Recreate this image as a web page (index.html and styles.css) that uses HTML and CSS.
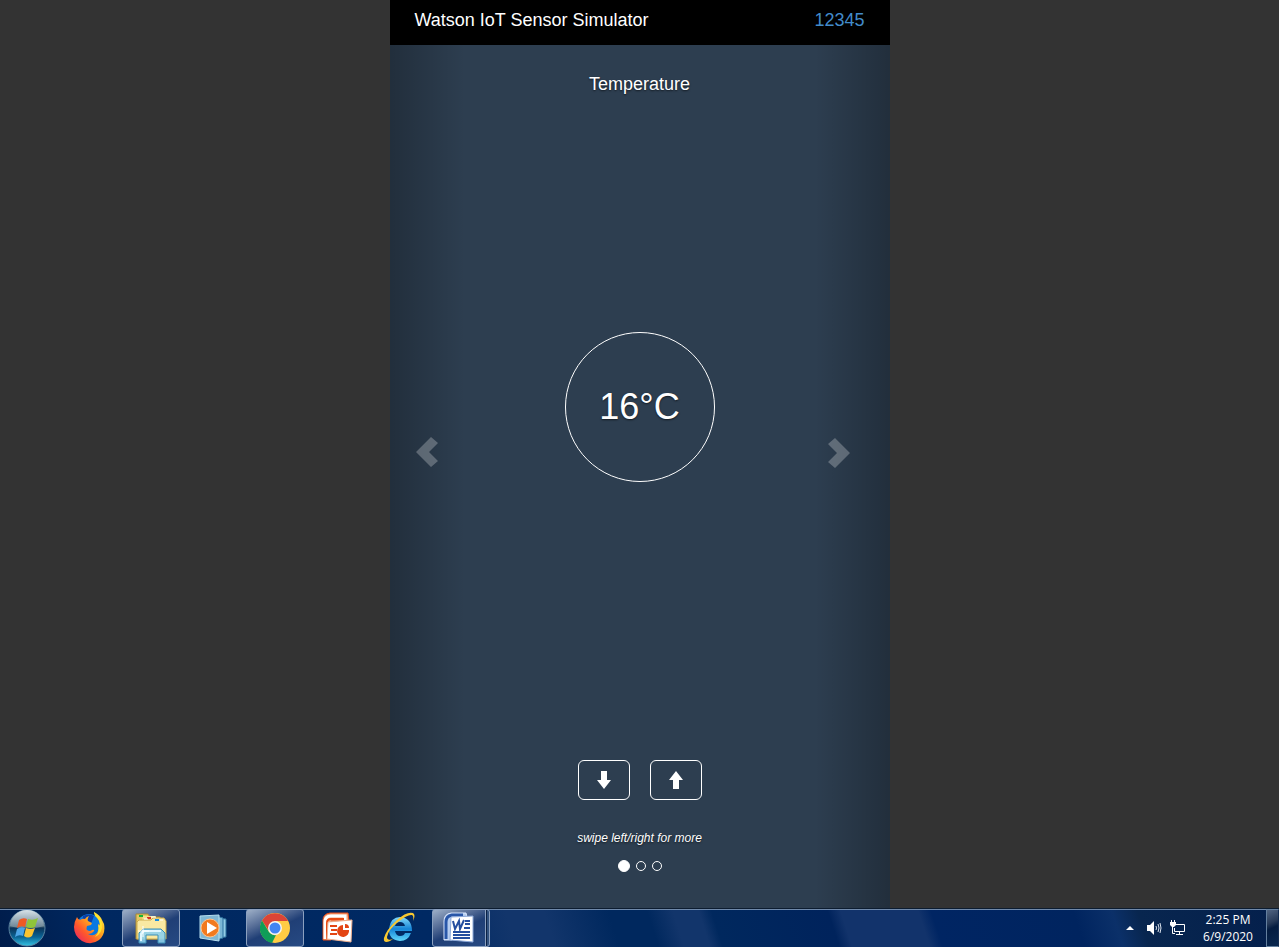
FILE: index.html
```html
<!DOCTYPE html>
<html lang="en">
<head>
<meta charset="utf-8">
<title>Watson IoT Sensor Simulator</title>
<link rel="stylesheet" href="styles.css">
</head>
<body>
<main class="app">
  <header class="app-header">
    <h1 class="app-title">Watson IoT Sensor Simulator</h1>
    <a class="device-link" href="#">12345</a>
  </header>
  <section class="carousel">
    <button class="control control-prev" aria-label="Previous sensor">
      <svg width="22" height="30" viewBox="0 0 22 30"><path d="M15 0 22 6 13 15 22 24 15 30 0 15Z" fill="#fff"/></svg>
    </button>
    <div class="slide">
      <h2 class="sensor-name">Temperature</h2>
      <div class="reading-area"><output class="reading">16°C</output></div>
      <div class="actions">
        <button class="step" aria-label="Decrease"><svg width="14" height="18" viewBox="0 0 14 18"><path d="M4 0H10V9H14L7 18 0 9H4Z" fill="#fff"/></svg></button>
        <button class="step" aria-label="Increase"><svg width="14" height="18" viewBox="0 0 14 18"><path d="M4 18H10V9H14L7 0 0 9H4Z" fill="#fff"/></svg></button>
      </div>
      <p class="hint">swipe left/right for more</p>
      <div class="dots">
        <button class="dot dot-active" aria-label="Slide 1"></button>
        <button class="dot" aria-label="Slide 2"></button>
        <button class="dot" aria-label="Slide 3"></button>
      </div>
    </div>
    <button class="control control-next" aria-label="Next sensor">
      <svg width="22" height="30" viewBox="0 0 22 30"><path d="M7 0 0 6 9 15 0 24 7 30 22 15Z" fill="#fff"/></svg>
    </button>
  </section>
</main>
<footer class="taskbar">
  <nav class="tasks">
    <button class="start" aria-label="Start">
      <svg width="38" height="38" viewBox="0 0 38 38">
        <defs>
          <linearGradient id="orb" x2="0" y2="1"><stop offset="0" stop-color="#6f8290"/><stop offset=".46" stop-color="#4b6677"/><stop offset=".5" stop-color="#0b3358"/><stop offset=".75" stop-color="#0a6496"/><stop offset="1" stop-color="#35c4e4"/></linearGradient>
          <linearGradient id="shine" x2="0" y2="1"><stop offset="0" stop-color="#e4edf2" stop-opacity=".9"/><stop offset="1" stop-color="#a8bfcd" stop-opacity=".3"/></linearGradient>
        </defs>
        <circle cx="19" cy="19" r="18" fill="url(#orb)" stroke="#5b83a0"/>
        <path d="M2 17a17 16 0 0 1 34 0Q19 23 2 17Z" fill="url(#shine)"/>
        <path d="M11 11q4-3 8-1l-2 8q-4-2-8 1Z" fill="#ee5a24"/>
        <path d="M20 10q5 2 10-1l-3 9q-4 2-9 0Z" fill="#8fc43a"/>
        <path d="M9 20q4-3 8-1l-2 8q-4-2-8 1Z" fill="#4ba4e6"/>
        <path d="M18 19q4 2 9 0l-3 8q-4 3-8 0Z" fill="#fcc430"/>
      </svg>
    </button>
    <button class="task" aria-label="Firefox">
      <svg width="32" height="32" viewBox="0 0 32 32">
        <defs>
          <linearGradient id="fox" x1="1" y1="0" x2="0" y2="1"><stop offset="0" stop-color="#fff24a"/><stop offset=".35" stop-color="#ffb21e"/><stop offset=".65" stop-color="#ff5a2b"/><stop offset="1" stop-color="#e41571"/></linearGradient>
        </defs>
        <circle cx="16" cy="14" r="12" fill="#0878e0"/>
        <path d="M10 4a12 12 0 0 1 11 0l-3 8h-9Z" fill="#0a3fa8"/>
        <path d="M4 5Q5 8 7 8q3-2 5-1 1-2 4-3-2 3-1 5l4 2-1 2-4 1q-1 3 0 4 3 2 5 0 3-1 2 1-2 3-6 3 5 3 9-1 3-4 1-9l2 1q0-6-5-10-1-2-1-3 6 3 8 8l2 4q2 10-5 16-8 6-17 1-8-5-8-14 0-5 3-10Z" fill="url(#fox)"/>
        <path d="M21 0q7 4 8 12 1 9-7 13 5-5 3-12l2 1q0-6-5-10Z" fill="#ffe22e"/>
      </svg>
    </button>
    <button class="task task-open" aria-label="Windows Explorer">
      <svg width="34" height="32" viewBox="0 0 34 32">
        <path d="M2 6V2h12l2 3h10l1 4v18H2Z" fill="#e5c762" stroke="#a88932"/>
        <path d="M8 8 9 4h12l2 3h8v20H5Z" fill="#f4e08d"/>
        <path d="M3 10 5 8h12l2-2h11l2 3v18H3Z" fill="#f9e9a2" stroke="#cdac4c"/>
        <path d="M5 3h4v2H5Z" fill="#15b635"/><path d="M13 5h4v2h-4Z" fill="#d63222"/><path d="M21 7h4v2h-4Z" fill="#158be0"/>
        <path d="M10 7h4M17 5h5M26 8h3" stroke="#fff"/>
        <path d="M5 31V21l4-4h18l4 4v10h-7v-8H12v8Z" fill="#8ed0eb" fill-opacity=".9" stroke="#3b8fb9"/>
        <path d="M7 29V22l3-3h17" fill="none" stroke="#e1f7ff" stroke-width="2"/>
        <path d="M9 14v11M4 19h11" stroke="#fff"/>
      </svg>
    </button>
    <button class="task" aria-label="Media Player">
      <svg width="28" height="28" viewBox="0 0 28 28">
        <path d="M17 4 27 5v18l-10 1Z" fill="#91cce6" stroke="#2d719e"/>
        <path d="M17 2 24 4v20l-7 2Z" fill="#79b6d5" stroke="#2d719e"/>
        <path d="M1 2 20 1v26L1 24Z" fill="#7fb7d4" stroke="#b6def0"/>
        <circle cx="11" cy="14" r="9" fill="#f27a1f" stroke="#ffc38c"/>
        <path d="M8 8 18 14 8 20Z" fill="#fff"/>
      </svg>
    </button>
    <button class="task task-open" aria-label="Chrome">
      <svg width="30" height="30" viewBox="0 0 30 30">
        <circle cx="15" cy="15" r="15" fill="#fc4"/>
        <path d="M2 7.500A15 15 0 0 1 28 8H15L9 18Z" fill="#db4437"/>
        <path d="M2 7.500 9 19q3 4 7 3l-4 8A15 15 0 0 1 2 7.500Z" fill="#109d58"/>
        <circle cx="15" cy="15" r="7" fill="#f5f5f5"/><circle cx="15" cy="15" r="5.500" fill="#4285f4"/>
      </svg>
    </button>
    <button class="task" aria-label="PowerPoint">
      <svg width="32" height="32" viewBox="0 0 32 32">
        <path d="M2 28V8q0-6 7-7h18l1 8H10v19Z" fill="#f4a77e" stroke="#e94a16"/>
        <path d="M4 27V10q0-6 6-6h14v4" fill="none" stroke="#fff" stroke-width="3"/>
        <path d="M6 27V11q0-4 4-4h13" fill="none" stroke="#e84812" stroke-width="2"/>
        <path d="M7 10 31 8 30 30 6 27Z" fill="#fff" stroke="#efb08f"/>
        <path d="M9 13h7v2H9Zm1 4h6v2h-6Zm-1 4h7v2H9Z" fill="#e34514"/>
        <path d="M22 13v5h6a6 6 0 1 1-6-5Z" fill="#e34514"/><path d="M24 12q4 0 4 4h-4Z" fill="#e34514"/>
      </svg>
    </button>
    <button class="task" aria-label="Internet Explorer">
      <svg width="34" height="32" viewBox="0 0 34 32">
        <defs><linearGradient id="ie" x2="0" y2="1"><stop offset="0" stop-color="#83dafb"/><stop offset=".5" stop-color="#1584d7"/><stop offset="1" stop-color="#60d6fa"/></linearGradient></defs>
        <path d="M30 19H13q1 5 5 5 4 0 5-3h6q-3 8-11 8-12-1-11-13Q9 5 18 5q12 1 12 14ZM13 14h10q-1-4-5-4t-5 4Z" fill="url(#ie)" fill-rule="evenodd"/>
        <path d="M31 9Q34 3 31 1 25-1 15 8 4 18 2 26q-1 6 6 3l3-2Q5 29 5 25q1-7 11-15Q26 2 30 3q2 1 1 6Z" fill="#f8c830"/>
      </svg>
    </button>
    <button class="task task-open task-stack" aria-label="Word">
      <svg width="32" height="32" viewBox="0 0 32 32">
        <path d="M2 28V9q0-7 7-8h15l1 4H10v23Z" fill="#b7cef0" stroke="#dce9ff"/>
        <path d="M4 27V10q0-6 6-7h11" fill="none" stroke="#2856a8" stroke-width="3"/>
        <path d="M9 5 31 4V30L8 28Z" fill="#fff" stroke="#8aa7d8"/>
        <path d="m11 9 2 8 4-8 1 8 4-9" fill="none" stroke="#244e9f" stroke-width="2"/>
        <path d="M23 9h5M23 12h5M22 16h6M11 20h17M11 23h17M11 26h17" stroke="#244e9f" stroke-width="2"/>
      </svg>
    </button>
  </nav>
  <div class="tray">
    <button class="tray-icon" aria-label="Show hidden icons"><svg width="8" height="4" viewBox="0 0 8 4"><path d="M0 4 4 0 8 4Z" fill="#fff"/></svg></button>
    <button class="tray-icon" aria-label="Volume"><svg width="16" height="14" viewBox="0 0 16 14"><path d="M1 4h3l4-4v14l-4-4H1Z" fill="#fff"/><path d="M10 5q1 2 0 4M12 3q2 4 0 8M14 2q2 5 0 10" fill="none" stroke="#dce4ee"/></svg></button>
    <button class="tray-icon" aria-label="Network"><svg width="16" height="16" viewBox="0 0 16 16"><path d="M5 4.500h9.500v7H4.500V8M6 14.500h7M9.500 12v2M2.500 7v6.500H5M1.500 0v3M4.500 0v3" fill="none" stroke="#fff"/><path d="M0 2h6v3L4 7H2L0 5Z" fill="#fff"/></svg></button>
    <time class="clock" datetime="2020-06-09T14:25"><span>2:25 PM</span><span>6/9/2020</span></time>
    <button class="show-desktop" aria-label="Show desktop"></button>
  </div>
</footer>
</body>
</html>
```
FILE: styles.css
```css
* { box-sizing: border-box; }
html { height: 100%; }
body {
  display: flex;
  flex-direction: column;
  min-height: 100%;
  margin: 0;
  background: #333;
  color: #fff;
  font-family: "Liberation Sans", Arial, sans-serif;
}
button {
  padding: 0;
  border: 0;
  background: none;
  color: inherit;
  font: inherit;
  cursor: pointer;
}
svg { display: block; }

.app {
  display: flex;
  flex: 1;
  flex-direction: column;
  width: 100%;
  max-width: 500px;
  margin: 0 auto;
  background: #2d3e50;
}
.app-header {
  display: flex;
  justify-content: space-between;
  padding: 10px 25px 15px;
  background: #000;
  font-size: 18px;
  line-height: 20px;
}
.app-title, .sensor-name {
  margin: 0;
  font-size: 18px;
  font-weight: 400;
  line-height: 20px;
}
.device-link { color: #428bca; text-decoration: none; }

.carousel {
  display: grid;
  flex: 1;
  grid-template-columns: 15% 1fr 15%;
  text-shadow: 0 1px 2px rgba(0, 0, 0, .6);
}
.control {
  display: flex;
  align-items: center;
  justify-content: center;
}
.control svg { opacity: .25; }
.control-prev {
  padding-bottom: 49px;
  background: linear-gradient(to right, rgba(0, 0, 0, .25), transparent);
}
.control-next {
  padding: 0 26px 47px 0;
  background: linear-gradient(to left, rgba(0, 0, 0, .25), transparent);
}
.slide {
  display: flex;
  flex-direction: column;
  align-items: center;
  padding: 29px 0 35px;
}
.reading-area {
  display: flex;
  flex: 1;
  align-items: center;
  padding-bottom: 41px;
}
.reading {
  display: grid;
  place-items: center;
  width: 150px;
  height: 150px;
  border: 1px solid #fff;
  border-radius: 50%;
  font-size: 36px;
  line-height: 40px;
}
.actions { display: flex; gap: 20px; }
.step {
  display: grid;
  place-items: center;
  width: 52px;
  height: 40px;
  border: 1px solid #fff;
  border-radius: 6px;
}
.hint {
  margin: 30px 0 12px;
  font-size: 12px;
  font-style: italic;
  line-height: 17px;
}
.dots {
  display: flex;
  align-items: center;
  gap: 6px;
  height: 14px;
}
.dot {
  width: 10px;
  height: 10px;
  border: 1px solid #fff;
  border-radius: 50%;
}
.dot-active {
  width: 12px;
  height: 12px;
  background: #fff;
}

.taskbar {
  display: flex;
  justify-content: space-between;
  height: 39px;
  border-top: 1px solid #0c1c30;
  background:
    linear-gradient(#6f89ab, #6f89ab) top / 100% 1px no-repeat,
    linear-gradient(72deg, #001c4a 0%, #002860 8%, #002963 34%, #12356b 40%, #12356b 43%, #00285e 48%, #00285e 51%, #12356b 53%, #12356b 55%, #00285e 56%, #00235c 65%, #12336b 66%, #12336b 72%, #002563 73%, #00245f 84%, #0b3069 87%, #08264f 89%, #041f4c 100%);
}
.tasks, .tray { display: flex; }
.tasks { gap: 4px; }
.start {
  width: 56px;
  padding-left: 8px;
}
.task {
  display: grid;
  place-items: center;
  width: 58px;
}
.task-open {
  border: 1px solid #8ba0bf;
  border-radius: 3px;
  background: linear-gradient(155deg, #9dafc7 0%, #586f98 30%, #203f76 52%, #274a83 100%);
}
.task-stack {
  padding-right: 6px;
  background:
    linear-gradient(to right, #8ba0bf 1px, #0b2146 1px, #0b2146 2px, #32527f 2px) right / 4px 100% no-repeat,
    linear-gradient(155deg, #9dafc7 0%, #586f98 30%, #203f76 52%, #274a83 100%);
}
.tray { align-items: center; }
.tray-icon {
  display: grid;
  place-items: center;
  width: 24px;
  height: 24px;
}
.clock {
  display: flex;
  flex-direction: column;
  width: 76px;
  font-family: "Open Sans", "Noto Sans", sans-serif;
  font-size: 12px;
  line-height: 17px;
  text-align: center;
}
.show-desktop {
  align-self: stretch;
  width: 13px;
  border: 1px solid #64809f;
  border-right-color: #142c50;
  background: linear-gradient(155deg, #526582 0%, #273a58 35%, #041c40 50%, #0a2850 100%);
}
```
